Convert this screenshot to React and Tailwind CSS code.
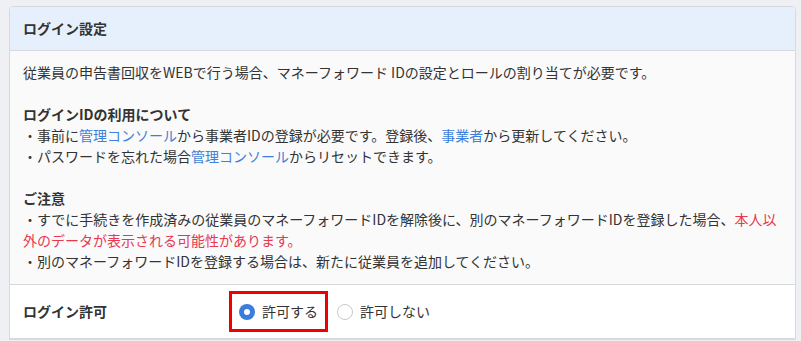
import React from "react";

const Link = ({ children }) => <span className="text-[#3d7fd9]">{children}</span>;

export default function App() {
  return (
    <div
      className="w-[801px] h-[341px] bg-[#eff0f4] pt-[6px] pl-[9px] pr-[5px] overflow-hidden text-[14px] text-[#333]"
      style={{ fontFamily: '"Noto Sans CJK JP", "Noto Sans", sans-serif' }}
    >
      <div className="border border-[#d6d9de] rounded-t-[4px] overflow-hidden bg-white">
        <div className="h-[44px] bg-[#e6f0fc] border-b border-[#d6d9de] flex items-center px-[13px] font-bold leading-[21px]">
          ログイン設定
        </div>
        <div className="bg-[#fafafa] px-[13px] pt-[11px] pb-[12px] leading-[21px] border-b border-[#d6d9de]">
          <div>従業員の申告書回収をWEBで行う場合、マネーフォワード IDの設定とロールの割り当てが必要です。</div>
          <div className="h-[21px]"></div>
          <div className="font-bold">ログインIDの利用について</div>
          <div>・事前に<Link>管理コンソール</Link>から事業者IDの登録が必要です。登録後、<Link>事業者</Link>から更新してください。</div>
          <div>・パスワードを忘れた場合<Link>管理コンソール</Link>からリセットできます。</div>
          <div className="h-[21px]"></div>
          <div className="font-bold">ご注意</div>
          <div className="whitespace-nowrap">
            ・すでに手続きを作成済みの従業員のマネーフォワードIDを解除後に、別のマネーフォワードIDを登録した場合、<span className="text-[#e8384f]">本人以</span>
          </div>
          <div className="text-[#e8384f]">外のデータが表示される可能性があります。</div>
          <div>・別のマネーフォワードIDを登録する場合は、新たに従業員を追加してください。</div>
        </div>
        <div className="h-[54px] bg-white flex items-center px-[13px] border-b border-[#d6d9de]">
          <div className="w-[206px] font-bold">ログイン許可</div>
          <div className="flex items-center">
            <div className="border-[3px] border-[#f00000] h-[41px] w-[99px] flex items-center pl-[7px] gap-[7px]">
              <span className="w-[16px] h-[16px] rounded-full bg-[#3b7ddd] flex items-center justify-center">
                <span className="w-[6px] h-[6px] rounded-full bg-white"></span>
              </span>
              <span>許可する</span>
            </div>
            <div className="flex items-center gap-[7px] ml-[9px]">
              <span className="w-[16px] h-[16px] rounded-full border border-[#c5c8cd] bg-white"></span>
              <span>許可しない</span>
            </div>
          </div>
        </div>
      </div>
    </div>
  );
}
